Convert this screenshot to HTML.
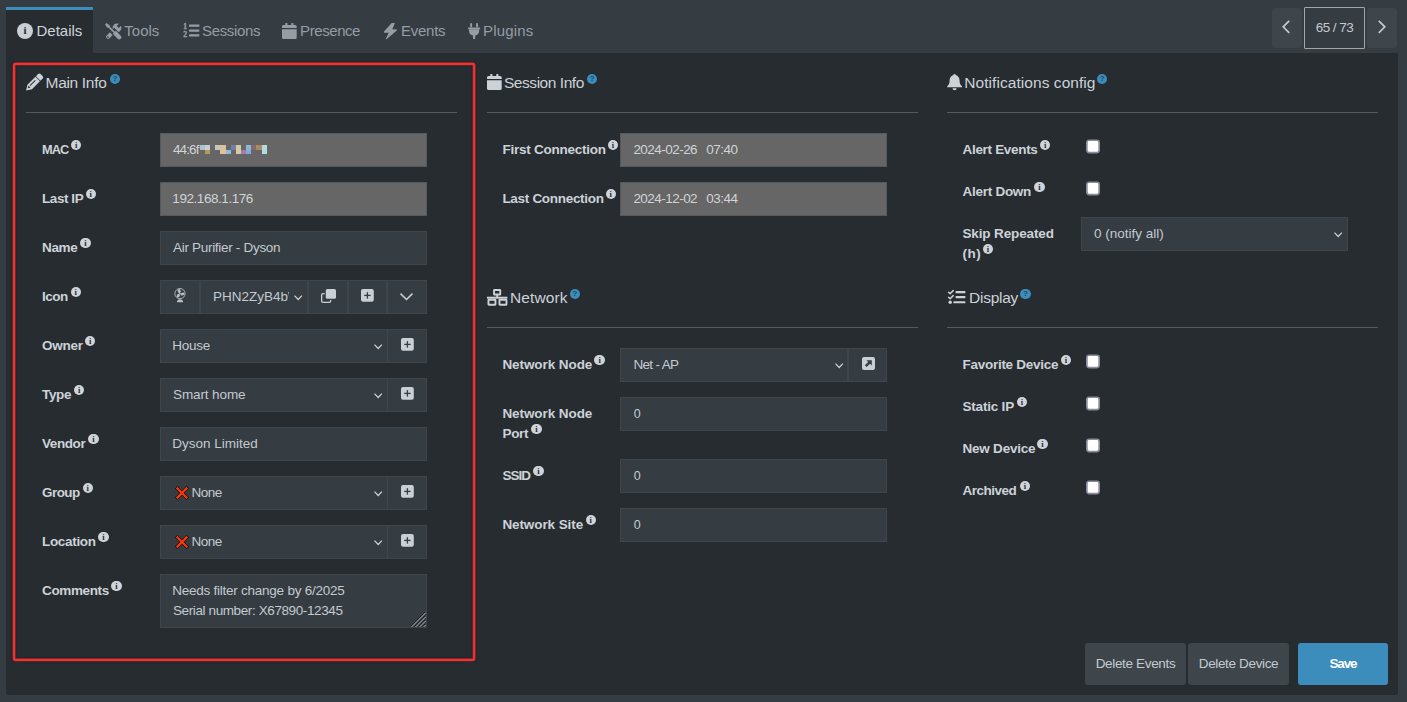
<!DOCTYPE html>
<html lang="en">
<head>
<meta charset="utf-8">
<title>Device details</title>
<style>
*{box-sizing:border-box;margin:0;padding:0}
html,body{width:1407px;height:702px;overflow:hidden}
body{background:#353c42;color:#bec5cb;font-family:"Liberation Sans",sans-serif;font-size:13px;line-height:20px;position:relative}
svg{display:block;overflow:visible}
.abs{position:absolute}
.t{white-space:nowrap}
#tabs{position:absolute;left:6px;top:0;width:1392px;height:695px;background:#272c30;border-radius:0 0 3px 3px}
#nav{position:absolute;left:0;top:0;width:1392px;height:53px;background:#353c42;list-style:none}
#nav li{position:absolute;top:7px;height:46px;color:#969da5;font-size:15px;white-space:nowrap}
#nav li.active{background:#272c30;border-top:3px solid #3c8dbc;color:#ced4da}
#nav li .ic{position:absolute}
#nav li .tx{position:absolute;top:14px;line-height:20px}
#nav li.active .tx{top:11px}
.ci{display:block;width:16px;height:16px;border-radius:50%;background:#c9cfd5;color:#272c30;font-family:"Liberation Serif",serif;font-weight:bold;font-size:11px;line-height:15.5px;text-align:center}
.pbtn{position:absolute;top:8px;width:30px;height:40px;background:#3e464c;border-radius:3px}
.pbox{position:absolute;top:7px;width:61px;height:42px;border:1px solid #a3a6a8;background:#353c42;color:#c3cad0;font-size:13.5px;line-height:40px;text-align:center;border-radius:1px}
.col{position:absolute;top:0;width:431px}
h4{position:absolute;left:0;height:24px;font-weight:normal;font-size:15.5px;line-height:24px;color:#ccd2d8;white-space:nowrap}
h4 .ic{position:absolute}
h4 .tx{position:absolute;top:0.5px}
.q{position:absolute;width:10.4px;height:10.4px;border-radius:50%;background:#3c8dbc;color:#1f4660;font-size:8px;font-weight:bold;line-height:10.4px;text-align:center}
hr{position:absolute;left:0;width:431px;height:1px;border:0;background:#56595c}
.fg{position:absolute;left:0;width:431px;height:34px}
.fg label{position:absolute;left:16px;top:6.5px;font-weight:bold;font-size:13.5px;line-height:20px;color:#ccd2d8;white-space:nowrap}
.i{position:absolute;width:10.4px;height:10.4px;border-radius:50%;background:#cfd4da;color:#272c30;font-family:"Liberation Serif",serif;font-size:8.5px;font-weight:bold;line-height:10.4px;text-align:center}
.ctl{position:absolute;left:134px;top:0;width:267px;height:34px;background:#353c42;border:1px solid #3e464c;color:#c3cad0;font-size:13.5px;line-height:20px;padding:5.5px 12px 0 12px;white-space:nowrap;overflow:hidden}
.ctl.dis{background:#666;border-color:#52595f;color:#d0d4d8}
.ctl.sel{width:228px}
.add{position:absolute;top:0;width:40px;height:34px;background:#353c42;border:1px solid #3e464c}
.chev{position:absolute}
.xi{position:absolute;left:14.2px;top:9.2px}
.mos{position:absolute;width:68px;height:10px}
.mos i{position:absolute;width:5.2px;height:4.9px}
.cb{position:absolute;left:139px;width:14px;height:15px}
.btn{position:absolute;top:643px;height:42px;border-radius:3px;background:#3e464c;color:#c3cad0;font-size:13.5px;line-height:42px;text-align:center;white-space:nowrap}
.btn.pri{background:#3c8dbc;color:#fff;font-weight:bold}
#redbox{position:absolute;left:0;top:0;pointer-events:none;filter:drop-shadow(0.6px 0.6px 0.8px rgba(0,0,0,.45))}
#c2 hr{left:0.6px}
#c2 h4 .ic{margin-left:0.5px}
#c3 .fg label{left:15.5px}

</style>
</head>
<body>
<div id="tabs">
<ul id="nav">
<li class="active" style="left:0.0px;width:87px"><span class="ic" style="left:11px;top:13px"><span class="ci">i</span></span><span class="tx" style="left:30.5px"><span class="t" id="tab-details" style="">Details</span></span></li>
<li style="left:92.0px;width:72px"><span class="ic" style="left:6.599999999999994px;top:15.8px"><svg width="17" height="17" viewBox="0 0 17 17" style="" aria-hidden="true"><g fill="none" stroke-linecap="round"><line x1="11" y1="6" x2="3.1" y2="13.9" stroke="#969da5" stroke-width="4"/><circle cx="12" cy="4.8" r="4.4" fill="#969da5" stroke="none"/><line x1="12.8" y1="4" x2="17.4" y2="-0.6" stroke="#353c42" stroke-width="3" stroke-linecap="butt"/><circle cx="2.9" cy="14.1" r="0.85" fill="#353c42" stroke="none"/><line x1="7" y1="7" x2="15.4" y2="15.4" stroke="#353c42" stroke-width="6.2" stroke-linecap="butt"/><polygon points="0,1.4 1.4,0 4.6,2.2 4.9,4.9 2.2,4.6" fill="#969da5" stroke="none"/><line x1="2.5" y1="2.5" x2="8.8" y2="8.8" stroke="#969da5" stroke-width="1.7" stroke-linecap="butt"/><line x1="10.4" y1="10.4" x2="14.2" y2="14.2" stroke="#969da5" stroke-width="4.4"/></g></svg></span><span class="tx" style="left:26.299999999999997px"><span class="t" id="tab-tools" style="">Tools</span></span></li>
<li style="left:170.0px;width:94px"><span class="ic" style="left:6.699999999999989px;top:17.4px"><svg width="17" height="14" viewBox="0 0 17 14" style="" aria-hidden="true"><g fill="#969da5"><rect x="6" y="0.6" width="10.4" height="2.2" rx="0.6"/><rect x="6" y="5.5" width="10.4" height="2.2" rx="0.6"/><rect x="6" y="10.2" width="10.4" height="2.2" rx="0.6"/><text x="0.2" y="5.1" font-family="Liberation Serif, serif" font-weight="bold" font-size="7.6" stroke="#969da5" stroke-width="0.35">1</text><text x="0.2" y="13.4" font-family="Liberation Serif, serif" font-weight="bold" font-size="7.6" stroke="#969da5" stroke-width="0.35">2</text></g></svg></span><span class="tx" style="left:26.099999999999994px"><span class="t" id="tab-sessions" style="letter-spacing:-0.357px;">Sessions</span></span></li>
<li style="left:270.0px;width:96px"><span class="ic" style="left:6.199999999999989px;top:16.1px"><svg width="15" height="16" viewBox="0 0 15 16" style="" aria-hidden="true"><g fill="#969da5"><path d="M0 3.6a1.5 1.5 0 0 1 1.5-1.5h11.7a1.5 1.5 0 0 1 1.5 1.5v1.5h-14.7z"/><path d="M0 6.2h14.7v8.3a1.5 1.5 0 0 1-1.5 1.5h-11.7a1.5 1.5 0 0 1-1.5-1.5z"/><rect x="3.3" y="0" width="2.1" height="3.4" rx="0.5"/><rect x="9.299999999999999" y="0" width="2.1" height="3.4" rx="0.5"/></g></svg></span><span class="tx" style="left:24.100000000000023px"><span class="t" id="tab-presence" style="letter-spacing:-0.429px;">Presence</span></span></li>
<li style="left:372.0px;width:78px"><span class="ic" style="left:6.199999999999989px;top:15.8px"><svg width="13" height="17" viewBox="0 0 13 17" style="" aria-hidden="true"><polygon fill="#969da5" points="7.7,0 10.9,0 8.3,6.3 13,6.5 12.8,7.6 2.5,16.3 1.7,16 4.8,9.8 0,9.7 0,8.5"/></svg></span><span class="tx" style="left:23.100000000000023px"><span class="t" id="tab-events" style="letter-spacing:-0.28px;">Events</span></span></li>
<li style="left:455.0px;width:84px"><span class="ic" style="left:6.800000000000011px;top:16.1px"><svg width="13" height="16" viewBox="0 0 13 16" style="" aria-hidden="true"><g fill="#969da5"><rect x="2.2" y="0" width="1.9" height="4.4" rx="0.9"/><rect x="8.1" y="0" width="1.9" height="4.4" rx="0.9"/><rect x="0" y="4.5" width="12.2" height="1.7" rx="0.6"/><path d="M1 6.2h10.2v1.6c0 2.6-1.6 4.3-4 4.8v3.4h-2.2v-3.4c-2.4-0.5-4-2.2-4-4.8z"/></g></svg></span><span class="tx" style="left:22.0px"><span class="t" id="tab-plugins" style="letter-spacing:0.167px;">Plugins</span></span></li>
</ul>
<div class="pbtn" style="left:1266.0px"><span class="abs" style="left:10.1px;top:11.8px"><svg width="8" height="14" viewBox="0 0 8 14" style="" aria-hidden="true"><polyline fill="none" stroke="#c3cad0" stroke-width="1.7" points="7.2,0.8 1.2,6.8 7.2,12.8"/></svg></span></div>
<div class="pbox" style="left:1298.0px"><span class="t" id="pager" style="letter-spacing:-0.517px;">65 / 73</span></div>
<div class="pbtn" style="left:1361.0px"><span class="abs" style="left:11.2px;top:11.8px"><svg width="8" height="14" viewBox="0 0 8 14" style="" aria-hidden="true"><polyline fill="none" stroke="#c3cad0" stroke-width="1.7" points="0.8,0.8 6.8,6.8 0.8,12.8"/></svg></span></div>
<div class="col" id="c1" style="left:20.0px">
<h4 style="top:70px"><span class="ic" style="left:-0.2px;top:3.5px"><svg width="17" height="17" viewBox="0 0 17 17" style="" aria-hidden="true"><g transform="translate(0.1,16.6) rotate(-45)"><path fill="#ccd2d8" d="M0 0L5.1 -3.2H16.4V3.2H5.1z"/><path fill="#ccd2d8" d="M17.1 -3.2h3a1.8 1.8 0 0 1 1.8 1.8v2.8a1.8 1.8 0 0 1-1.8 1.8h-3z"/><path fill="#272c30" d="M2.9 -0.6L5.2 -1.700V0.900z"/><rect x="6.2" y="-1.2" width="7.6" height="0.9" fill="#272c30"/></g></svg></span><span class="tx" style="left:19.6px"><span class="t" id="h-main" style="letter-spacing:-0.325px;">Main Info</span></span><span class="q" style="left:83.8px;top:3.9px">?</span></h4>
<hr style="top:112px">
<div class="fg" style="top:133px;height:34px"><label><span class="t" id="l-mac" style="letter-spacing:-0.9px;font-size:12.8px;">MAC</span><span class="i" style="left:28.9px;top:0.0px">i</span></label><div class="ctl dis"><span class="t" id="v-mac" style="letter-spacing:-0.9px;">44:6f</span><span class="mos" style="left:38.8px;top:10.8px"><i style="left:0.00px;top:0.0px;background:#a9c3cf"></i><i style="left:5.15px;top:0.0px;background:#c9cdd3"></i><i style="left:5.15px;top:4.8px;background:#b89a58"></i><i style="left:15.45px;top:0.0px;background:#c3c7c0"></i><i style="left:20.60px;top:0.0px;background:#dcc29c"></i><i style="left:20.60px;top:4.8px;background:#dcc29c"></i><i style="left:25.75px;top:4.8px;background:#8fbbe0"></i><i style="left:30.90px;top:0.0px;background:#6a82a8"></i><i style="left:36.05px;top:0.0px;background:#d6c8a4"></i><i style="left:36.05px;top:4.8px;background:#d6c8a4"></i><i style="left:41.20px;top:4.8px;background:#a77aa8"></i><i style="left:46.35px;top:0.0px;background:#8fb4d9"></i><i style="left:46.35px;top:4.8px;background:#7dacd6"></i><i style="left:51.50px;top:0.0px;background:#86696a"></i><i style="left:56.65px;top:0.0px;background:#a98a66"></i><i style="left:61.80px;top:0.0px;background:#b4dce0"></i><i style="left:61.80px;top:4.8px;background:#b4dce0"></i></span></div></div>
<div class="fg" style="top:182px;height:34px"><label><span class="t" id="l-lastip" style="letter-spacing:-0.434px;">Last IP</span><span class="i" style="left:43.6px;top:0.0px">i</span></label><div class="ctl dis"><span class="t" id="v-lastip" style="letter-spacing:-0.442px;margin-left:-0.7px;">192.168.1.176</span></div></div>
<div class="fg" style="top:231px;height:34px"><label><span class="t" id="l-name" style="letter-spacing:-0.367px;">Name</span><span class="i" style="left:38.2px;top:0.0px">i</span></label><div class="ctl"><span class="t" id="v-name" style="letter-spacing:-0.3px;">Air Purifier - Dyson</span></div></div>
<div class="fg" style="top:280px;height:34px"><label><span class="t" id="l-icon" style="letter-spacing:-0.467px;">Icon</span><span class="i" style="left:28.6px;top:0.0px">i</span></label><span class="add" style="left:134px"><span class="abs" style="left:12.9px;top:7.2px"><svg width="12" height="15" viewBox="0 0 12 15" style="" aria-hidden="true"><g fill="none" stroke="#b9bfc5" stroke-width="0.9"><circle cx="6" cy="5.6" r="5.1"/></g><g fill="#b9bfc5"><ellipse cx="5.2" cy="3" rx="1.5" ry="1.9" transform="rotate(-25 5.2 3)"/><ellipse cx="8.6" cy="6" rx="1.9" ry="1.4" transform="rotate(-20 8.6 6)"/><ellipse cx="4.3" cy="7.6" rx="1.5" ry="1.9" transform="rotate(35 4.3 7.6)"/><circle cx="6" cy="5.6" r="0.9"/><path d="M2.8 14.2c0.300-1.900 1.400-3 3.200-3s2.900 1.100 3.200 3z"/></g></svg></span></span><div class="ctl sel" style="left:174px;width:108px;padding-right:18px"><span class="t" id="v-icon" style="display:inline-block;max-width:76.4px;overflow:hidden;vertical-align:top">PHN2ZyB4bWxucz0i</span></div><span class="chev" style="left:267.8px;top:14.6px"><svg width="8.4" height="5.2" viewBox="0 0 8.4 5.2" style="" aria-hidden="true"><polyline fill="none" stroke="#c9cfd5" stroke-width="1.3" points="0.5,0.6 4.2,4.5 7.9,0.6"/></svg></span><span class="add" style="left:282px"><span class="abs" style="left:11.7px;top:7.9px"><svg width="15" height="14" viewBox="0 0 15 14" style="" aria-hidden="true"><rect x="0.65" y="4.65" width="9" height="8.8" rx="1.4" fill="none" stroke="#c9cfd5" stroke-width="1.3"/><rect x="3.7" y="-1.1" width="12.4" height="12" rx="2" fill="#353c42"/><rect x="4.8" y="0" width="10.2" height="9.8" rx="1.6" fill="#c9cfd5"/></svg></span></span><span class="add" style="left:322px;width:39px"><span class="abs" style="left:12.1px;top:8.2px"><svg width="13" height="13" viewBox="0 0 13 13" style="" aria-hidden="true"><rect x="0" y="0" width="12.8" height="12.8" rx="2" fill="#c9cfd5"/><rect x="3.2" y="5.75" width="6.4" height="1.3" fill="#353c42"/><rect x="5.75" y="3.2" width="1.3" height="6.4" fill="#353c42"/></svg></span></span><span class="add" style="left:361px"><span class="abs" style="left:12.2px;top:11.9px"><svg width="13" height="7.2" viewBox="0 0 13 7.2" style="" aria-hidden="true"><polyline fill="none" stroke="#c9cfd5" stroke-width="1.5" points="0.5,0.6 6.5,6.5 12.5,0.6"/></svg></span></span></div>
<div class="fg" style="top:329px;height:34px"><label><span class="t" id="l-owner" style="letter-spacing:-0.275px;">Owner</span><span class="i" style="left:43.0px;top:0.0px">i</span></label><div class="ctl sel"><span class="t" id="v-owner" style="letter-spacing:-0.275px;margin-left:-0.7px;">House</span></div><span class="chev" style="left:347.8px;top:14.6px"><svg width="8.4" height="5.2" viewBox="0 0 8.4 5.2" style="" aria-hidden="true"><polyline fill="none" stroke="#c9cfd5" stroke-width="1.3" points="0.5,0.6 4.2,4.5 7.9,0.6"/></svg></span><span class="add" style="left:361px"><span class="abs" style="left:12.6px;top:8.2px"><svg width="13" height="13" viewBox="0 0 13 13" style="" aria-hidden="true"><rect x="0" y="0" width="12.8" height="12.8" rx="2" fill="#c9cfd5"/><rect x="3.2" y="5.75" width="6.4" height="1.3" fill="#353c42"/><rect x="5.75" y="3.2" width="1.3" height="6.4" fill="#353c42"/></svg></span></span></div>
<div class="fg" style="top:378px;height:34px"><label><span class="t" id="l-type" style="letter-spacing:-0.333px;">Type</span><span class="i" style="left:32.0px;top:0.0px">i</span></label><div class="ctl sel"><span class="t" id="v-type" style="letter-spacing:-0.111px;">Smart home</span></div><span class="chev" style="left:347.8px;top:14.6px"><svg width="8.4" height="5.2" viewBox="0 0 8.4 5.2" style="" aria-hidden="true"><polyline fill="none" stroke="#c9cfd5" stroke-width="1.3" points="0.5,0.6 4.2,4.5 7.9,0.6"/></svg></span><span class="add" style="left:361px"><span class="abs" style="left:12.6px;top:8.2px"><svg width="13" height="13" viewBox="0 0 13 13" style="" aria-hidden="true"><rect x="0" y="0" width="12.8" height="12.8" rx="2" fill="#c9cfd5"/><rect x="3.2" y="5.75" width="6.4" height="1.3" fill="#353c42"/><rect x="5.75" y="3.2" width="1.3" height="6.4" fill="#353c42"/></svg></span></span></div>
<div class="fg" style="top:427px;height:34px"><label><span class="t" id="l-vendor" style="letter-spacing:-0.42px;">Vendor</span><span class="i" style="left:46.2px;top:0.0px">i</span></label><div class="ctl"><span class="t" id="v-vendor" style="margin-left:-0.7px;">Dyson Limited</span></div></div>
<div class="fg" style="top:476px;height:34px"><label><span class="t" id="l-group" style="letter-spacing:-0.55px;">Group</span><span class="i" style="left:40.6px;top:0.0px">i</span></label><div class="ctl sel"><span class="xi"><svg width="14" height="14" viewBox="0 0 14 14" style="" aria-hidden="true"><g stroke-linecap="square"><path d="M2.5 2.5L11.5 11.5M11.5 2.500L2.500 11.500" stroke="#1c0d06" stroke-width="3.7"/><path d="M2.5 2.5L11.5 11.5M11.5 2.500L2.500 11.500" stroke="#f5390f" stroke-width="2.3"/></g></svg></span><span class="t" id="v-group" style="letter-spacing:-0.5px;margin-left:18.6px">None</span></div><span class="chev" style="left:347.8px;top:14.6px"><svg width="8.4" height="5.2" viewBox="0 0 8.4 5.2" style="" aria-hidden="true"><polyline fill="none" stroke="#c9cfd5" stroke-width="1.3" points="0.5,0.6 4.2,4.5 7.9,0.6"/></svg></span><span class="add" style="left:361px"><span class="abs" style="left:12.6px;top:8.2px"><svg width="13" height="13" viewBox="0 0 13 13" style="" aria-hidden="true"><rect x="0" y="0" width="12.8" height="12.8" rx="2" fill="#c9cfd5"/><rect x="3.2" y="5.75" width="6.4" height="1.3" fill="#353c42"/><rect x="5.75" y="3.2" width="1.3" height="6.4" fill="#353c42"/></svg></span></span></div>
<div class="fg" style="top:525px;height:34px"><label><span class="t" id="l-loc" style="letter-spacing:-0.314px;">Location</span><span class="i" style="left:56.2px;top:0.0px">i</span></label><div class="ctl sel"><span class="xi"><svg width="14" height="14" viewBox="0 0 14 14" style="" aria-hidden="true"><g stroke-linecap="square"><path d="M2.5 2.5L11.5 11.5M11.5 2.500L2.500 11.500" stroke="#1c0d06" stroke-width="3.7"/><path d="M2.5 2.5L11.5 11.5M11.5 2.500L2.500 11.500" stroke="#f5390f" stroke-width="2.3"/></g></svg></span><span class="t" id="v-loc" style="letter-spacing:-0.5px;margin-left:18.6px">None</span></div><span class="chev" style="left:347.8px;top:14.6px"><svg width="8.4" height="5.2" viewBox="0 0 8.4 5.2" style="" aria-hidden="true"><polyline fill="none" stroke="#c9cfd5" stroke-width="1.3" points="0.5,0.6 4.2,4.5 7.9,0.6"/></svg></span><span class="add" style="left:361px"><span class="abs" style="left:12.6px;top:8.2px"><svg width="13" height="13" viewBox="0 0 13 13" style="" aria-hidden="true"><rect x="0" y="0" width="12.8" height="12.8" rx="2" fill="#c9cfd5"/><rect x="3.2" y="5.75" width="6.4" height="1.3" fill="#353c42"/><rect x="5.75" y="3.2" width="1.3" height="6.4" fill="#353c42"/></svg></span></span></div>
<div class="fg" style="top:574px;height:54px"><label><span class="t" id="l-comments" style="letter-spacing:-0.371px;">Comments</span><span class="i" style="left:69.3px;top:0.0px">i</span></label><div class="ctl ta" style="height:54px"><span class="t" id="v-c1" style="letter-spacing:-0.25px;margin-left:-0.7px;">Needs filter change by 6/2025</span><br><span class="t" id="v-c2" style="letter-spacing:-0.392px;">Serial number: X67890-12345</span><span class="abs" style="right:0.5px;bottom:0.5px"><svg width="15" height="15" viewBox="0 0 15 15" style="" aria-hidden="true"><line x1="-0.15" y1="14.2" x2="14.2" y2="-0.15" stroke="#1d2125" stroke-width="1"/><line x1="0.60" y1="14.9" x2="14.9" y2="0.60" stroke="#b4b7ba" stroke-width="1"/><line x1="3.90" y1="14.2" x2="14.2" y2="3.90" stroke="#1d2125" stroke-width="1"/><line x1="4.65" y1="14.9" x2="14.9" y2="4.65" stroke="#b4b7ba" stroke-width="1"/><line x1="7.95" y1="14.2" x2="14.2" y2="7.95" stroke="#1d2125" stroke-width="1"/><line x1="8.70" y1="14.9" x2="14.9" y2="8.70" stroke="#b4b7ba" stroke-width="1"/><line x1="12.00" y1="14.2" x2="14.2" y2="12.00" stroke="#1d2125" stroke-width="1"/><line x1="12.75" y1="14.9" x2="14.9" y2="12.75" stroke="#b4b7ba" stroke-width="1"/></svg></span></div></div>
</div>
<div class="col" id="c2" style="left:480.4px">
<h4 style="top:70px"><span class="ic" style="left:0.1px;top:4.1px"><svg width="15" height="16" viewBox="0 0 15 16" style="" aria-hidden="true"><g fill="#ccd2d8"><path d="M0 3.6a1.5 1.5 0 0 1 1.5-1.5h11.7a1.5 1.5 0 0 1 1.5 1.5v1.5h-14.7z"/><path d="M0 6.2h14.7v8.3a1.5 1.5 0 0 1-1.5 1.5h-11.7a1.5 1.5 0 0 1-1.5-1.5z"/><rect x="3.3" y="0" width="2.1" height="3.4" rx="0.5"/><rect x="9.299999999999999" y="0" width="2.1" height="3.4" rx="0.5"/></g></svg></span><span class="tx" style="left:17.6px"><span class="t" id="h-session" style="letter-spacing:-0.454px;">Session Info</span></span><span class="q" style="left:100.6px;top:3.9px">?</span></h4>
<hr style="top:112px">
<div class="fg" style="top:133px;height:34px"><label><span class="t" id="l-first" style="letter-spacing:-0.24px;">First Connection</span><span class="i" style="left:105.4px;top:0.0px">i</span></label><div class="ctl dis"><span class="t" id="v-first" style="letter-spacing:-0.538px;word-spacing:1.4px">2024-02-26&nbsp; 07:40</span></div></div>
<div class="fg" style="top:182px;height:34px"><label><span class="t" id="l-last" style="letter-spacing:-0.3px;">Last Connection</span><span class="i" style="left:103.2px;top:0.0px">i</span></label><div class="ctl dis"><span class="t" id="v-last" style="letter-spacing:-0.538px;word-spacing:1.4px">2024-12-02&nbsp; 03:44</span></div></div>
<h4 style="top:285px"><span class="ic" style="left:0.2px;top:3.5px"><svg width="21" height="17" viewBox="0 0 21 17" style="" aria-hidden="true"><g fill="none" stroke="#ccd2d8" stroke-width="1.9"><rect x="7.05" y="0.95" width="6.2" height="4.6" rx="0.4"/><rect x="1.45" y="10.75" width="7" height="5" rx="0.4"/><rect x="12.45" y="10.75" width="7" height="5" rx="0.4"/></g><g fill="#ccd2d8"><rect x="0" y="7.7" width="20.4" height="2"/><rect x="9.3" y="6" width="1.8" height="2"/></g></svg></span><span class="tx" style="left:23.6px"><span class="t" id="h-network" style="letter-spacing:0.117px;">Network</span></span><span class="q" style="left:83.3px;top:3.9px">?</span></h4>
<hr style="top:327px">
<div class="fg" style="top:348px;height:34px"><label><span class="t" id="l-nn" style="letter-spacing:-0.073px;">Network Node</span><span class="i" style="left:92.1px;top:0.0px">i</span></label><div class="ctl sel"><span class="t" id="v-nn" style="letter-spacing:-0.657px;">Net - AP</span></div><span class="chev" style="left:348.5px;top:14.6px"><svg width="8.4" height="5.2" viewBox="0 0 8.4 5.2" style="" aria-hidden="true"><polyline fill="none" stroke="#c9cfd5" stroke-width="1.3" points="0.5,0.6 4.2,4.5 7.9,0.6"/></svg></span><span class="add" style="left:362px;width:39px"><span class="abs" style="left:12.8px;top:8.2px"><svg width="13" height="13" viewBox="0 0 13 13" style="" aria-hidden="true"><rect x="0" y="0" width="13" height="13" rx="2" fill="#c9cfd5"/><polygon fill="#353c42" points="4.4,3.2 9.8,3.2 9.8,8.600 8,6.800 4.700,10.100 2.900,8.300 6.200,5"/></svg></span></span></div>
<div class="fg" style="top:397px;height:47px"><label><span class="t" id="l-nnp1" style="letter-spacing:-0.073px;">Network Node</span><br><span class="t" id="l-nnp2" style="letter-spacing:-0.267px;">Port</span><span class="i" style="left:28.8px;top:20.0px">i</span></label><div class="ctl"><span class="t" id="v-nnp" style="font-size:12.5px;margin-left:0.4px;">0</span></div></div>
<div class="fg" style="top:459px;height:34px"><label><span class="t" id="l-ssid" style="letter-spacing:-0.933px;">SSID</span><span class="i" style="left:30.9px;top:0.0px">i</span></label><div class="ctl"><span class="t" id="v-ssid" style="font-size:12.5px;margin-left:0.4px;">0</span></div></div>
<div class="fg" style="top:508px;height:34px"><label><span class="t" id="l-site" style="letter-spacing:-0.091px;">Network Site</span><span class="i" style="left:83.2px;top:0.0px">i</span></label><div class="ctl"><span class="t" id="v-site" style="font-size:12.5px;margin-left:0.4px;">0</span></div></div>
</div>
<div class="col" id="c3" style="left:941.0px">
<h4 style="top:70px"><span class="ic" style="left:0px;top:3.5px"><svg width="16" height="17" viewBox="0 0 16 17" style="" aria-hidden="true"><g fill="#ccd2d8" transform="scale(1,0.955)"><circle cx="7.6" cy="1.2" r="1.2"/><path d="M7.6 1C3.9 1 2.6 4.2 2.6 7.4c0 2.9-1 4.2-2.4 5.4v1.2h14.8v-1.2c-1.4-1.2-2.4-2.5-2.4-5.4C12.600 4.200 11.300 1 7.600 1z"/><path d="M5.500 14.900a2.100 2.100 0 0 0 4.200 0z"/></g></svg></span><span class="tx" style="left:17.3px"><span class="t" id="h-notif" style="letter-spacing:0.058px;">Notifications config</span></span><span class="q" style="left:149.9px;top:3.9px">?</span></h4>
<hr style="top:112px">
<div class="fg" style="top:133px;height:34px"><label><span class="t" id="l-aev" style="letter-spacing:-0.309px;">Alert Events</span><span class="i" style="left:77.6px;top:0.0px">i</span></label><span class="cb" style="top:6px"><svg width="14" height="15" viewBox="0 0 14 15" style="" aria-hidden="true"><rect x="0.85" y="1.25" width="12.3" height="12.3" rx="2.2" fill="#fff" stroke="#8b8b9b" stroke-width="1.7"/></svg></span></div>
<div class="fg" style="top:175px;height:34px"><label><span class="t" id="l-adown" style="letter-spacing:-0.267px;">Alert Down</span><span class="i" style="left:71.8px;top:0.0px">i</span></label><span class="cb" style="top:6px"><svg width="14" height="15" viewBox="0 0 14 15" style="" aria-hidden="true"><rect x="0.85" y="1.25" width="12.3" height="12.3" rx="2.2" fill="#fff" stroke="#8b8b9b" stroke-width="1.7"/></svg></span></div>
<div class="fg" style="top:217px;height:47px"><label><span class="t" id="l-skip1" style="letter-spacing:-0.133px;">Skip Repeated</span><br><span class="t" id="l-skip2" style="letter-spacing:0.5px;">(h)</span><span class="i" style="left:20.2px;top:20.0px">i</span></label><div class="ctl" style="width:267px"><span class="t" id="v-skip" style="">0 (notify all)</span></div><span class="chev" style="left:386.6px;top:14.6px"><svg width="8.4" height="5.2" viewBox="0 0 8.4 5.2" style="" aria-hidden="true"><polyline fill="none" stroke="#c9cfd5" stroke-width="1.3" points="0.5,0.6 4.2,4.5 7.9,0.6"/></svg></span></div>
<h4 style="top:285px"><span class="ic" style="left:0.8px;top:4.8px"><svg width="18" height="15" viewBox="0 0 18 15" style="" aria-hidden="true"><g fill="#ccd2d8"><rect x="7.6" y="1.05" width="9.8" height="2.1" rx="0.5"/><rect x="7.6" y="6.05" width="9.8" height="2.1" rx="0.5"/><rect x="5.4" y="11.15" width="12" height="2.1" rx="0.5"/><circle cx="2.2" cy="12.2" r="1.7"/></g><g fill="none" stroke="#ccd2d8" stroke-width="1.5" stroke-linecap="round" stroke-linejoin="round"><polyline points="0.6,2.2 2.1,3.7 5.2,0.6"/><polyline points="0.6,7.2 2.1,8.7 5.2,5.6"/></g></svg></span><span class="tx" style="left:22.1px"><span class="t" id="h-display" style="letter-spacing:-0.283px;">Display</span></span><span class="q" style="left:73.3px;top:3.9px">?</span></h4>
<hr style="top:327px">
<div class="fg" style="top:348px;height:34px"><label><span class="t" id="l-fav" style="letter-spacing:-0.271px;">Favorite Device</span><span class="i" style="left:98.3px;top:0.0px">i</span></label><span class="cb" style="top:6px"><svg width="14" height="15" viewBox="0 0 14 15" style="" aria-hidden="true"><rect x="0.85" y="1.25" width="12.3" height="12.3" rx="2.2" fill="#fff" stroke="#8b8b9b" stroke-width="1.7"/></svg></span></div>
<div class="fg" style="top:390px;height:34px"><label><span class="t" id="l-static" style="letter-spacing:-0.2px;">Static IP</span><span class="i" style="left:54.2px;top:0.0px">i</span></label><span class="cb" style="top:6px"><svg width="14" height="15" viewBox="0 0 14 15" style="" aria-hidden="true"><rect x="0.85" y="1.25" width="12.3" height="12.3" rx="2.2" fill="#fff" stroke="#8b8b9b" stroke-width="1.7"/></svg></span></div>
<div class="fg" style="top:432px;height:34px"><label><span class="t" id="l-new" style="letter-spacing:-0.222px;">New Device</span><span class="i" style="left:74.7px;top:0.0px">i</span></label><span class="cb" style="top:6px"><svg width="14" height="15" viewBox="0 0 14 15" style="" aria-hidden="true"><rect x="0.85" y="1.25" width="12.3" height="12.3" rx="2.2" fill="#fff" stroke="#8b8b9b" stroke-width="1.7"/></svg></span></div>
<div class="fg" style="top:474px;height:34px"><label><span class="t" id="l-arch" style="letter-spacing:-0.5px;">Archived</span><span class="i" style="left:57.3px;top:0.0px">i</span></label><span class="cb" style="top:6px"><svg width="14" height="15" viewBox="0 0 14 15" style="" aria-hidden="true"><rect x="0.85" y="1.25" width="12.3" height="12.3" rx="2.2" fill="#fff" stroke="#8b8b9b" stroke-width="1.7"/></svg></span></div>
</div>
<div class="btn" style="left:1079.0px;width:101px"><span class="t" id="b-delev" style="letter-spacing:-0.333px;">Delete Events</span></div>
<div class="btn" style="left:1182.0px;width:101px"><span class="t" id="b-deldev" style="letter-spacing:-0.35px;">Delete Device</span></div>
<div class="btn pri" style="left:1292.0px;width:90px"><span class="t" id="b-save" style="letter-spacing:-1.133px;">Save</span></div>
</div>
<svg id="redbox" width="1407" height="702" viewBox="0 0 1407 702"><rect x="14.05" y="63.9" width="460.05" height="596" rx="1.6" fill="none" stroke="#ee3131" stroke-width="2.7"/></svg>
</body>
</html>
